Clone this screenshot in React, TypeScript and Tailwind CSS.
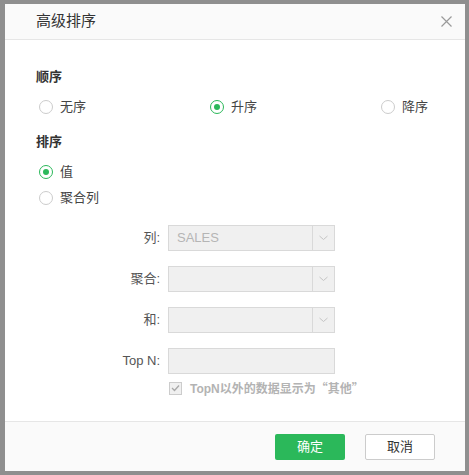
import React from "react";

const font = { fontFamily: '"Liberation Sans", "Noto Sans CJK SC", sans-serif' };
const cjk = { fontFamily: '"Noto Sans CJK SC", sans-serif' };

function Radio({ checked, label }: { checked?: boolean; label: string }) {
  return (
    <div className="flex items-center h-[18px]">
      <span
        className={
          checked
            ? "w-[14px] h-[14px] rounded-full border border-[#2bb85a] flex items-center justify-center bg-white"
            : "w-[14px] h-[14px] rounded-full border border-[#cccccc] bg-white"
        }
      >
        {checked && <span className="w-[6px] h-[6px] rounded-full bg-[#2bb85a]" />}
      </span>
      <span className="ml-[7px] text-[13px] text-[#444444]">{label}</span>
    </div>
  );
}

function Select({ value, arrow = true }: { value?: string; arrow?: boolean }) {
  return (
    <div className="w-[167px] h-[26px] border border-[#d9d9d9] bg-[#f0f0f0] flex items-stretch">
      <div className="flex-1 flex items-center pl-[8px] text-[13px] text-[#b5b5b5]">{value}</div>
      {arrow && (
        <div className="w-[22px] border-l border-[#d9d9d9] flex items-center justify-center">
          <svg width="9" height="6" viewBox="0 0 9 6" fill="none">
            <path d="M0.5 1 L4.5 4.5 L8.5 1" stroke="#c4c4c4" strokeWidth="1" />
          </svg>
        </div>
      )}
    </div>
  );
}

function Row({ label, children }: { label: string; children: React.ReactNode }) {
  return (
    <div className="flex items-center h-[26px]">
      <div className="w-[125px] text-right text-[13px] text-[#555555] pr-[1px]">{label}</div>
      <div className="ml-[7px]">{children}</div>
    </div>
  );
}

export default function App() {
  return (
    <div className="w-[469px] h-[475px] bg-[#8f8f8f] pl-[5px] pt-[4px]" style={font}>
      <div className="w-[460px] h-[467px] bg-white flex flex-col">
        <div className="h-[36px] bg-[#fafafa] border-b border-[#e6e6e6] flex items-center justify-between pl-[31px] pr-[13px]">
          <span className="text-[15px] text-[#333333]">高级排序</span>
          <svg width="11" height="11" viewBox="0 0 11 11" fill="none">
            <path d="M0.5 0.5 L10.5 10.5 M10.5 0.5 L0.5 10.5" stroke="#9a9a9a" strokeWidth="1.2" />
          </svg>
        </div>
        <div className="flex-1 pl-[31px]">
          <div className="mt-[28px] h-[18px] flex items-center text-[13px] font-bold text-[#333333]">顺序</div>
          <div className="mt-[12px] ml-[3px] flex">
            <div className="w-[171px]"><Radio label="无序" /></div>
            <div className="w-[171px]"><Radio checked label="升序" /></div>
            <div><Radio label="降序" /></div>
          </div>
          <div className="mt-[17px] h-[18px] flex items-center text-[13px] font-bold text-[#333333]">排序</div>
          <div className="mt-[12px] ml-[3px]"><Radio checked label="值" /></div>
          <div className="mt-[8px] ml-[3px]"><Radio label="聚合列" /></div>
          <div className="mt-[18px] flex flex-col gap-[15px]">
            <Row label="列:"><Select value="SALES" /></Row>
            <Row label="聚合:"><Select /></Row>
            <Row label="和:"><Select /></Row>
            <Row label="Top N:"><Select arrow={false} /></Row>
          </div>
          <div className="mt-[6px] ml-[133px] flex items-center h-[16px]">
            <span className="w-[13px] h-[13px] border border-[#cccccc] bg-[#f0f0f0] flex items-center justify-center">
              <svg width="9" height="8" viewBox="0 0 9 8" fill="none">
                <path d="M1 4 L3.5 6.5 L8 1.5" stroke="#a8a8a8" strokeWidth="1.3" />
              </svg>
            </span>
            <span className="ml-[8px] text-[12px] font-bold text-[#b3b3b3]">
              TopN以外的数据显示为<span style={cjk}>“其他”</span>
            </span>
          </div>
        </div>
        <div className="h-[50px] border-t border-[#e6e6e6] bg-[#fafafa] flex items-center justify-end pr-[30px] gap-[20px]">
          <button className="w-[70px] h-[26px] rounded-[2px] bg-[#2bb85a] text-white text-[13px]">确定</button>
          <button className="w-[70px] h-[26px] rounded-[2px] bg-white border border-[#cccccc] text-[#333333] text-[13px]">取消</button>
        </div>
      </div>
    </div>
  );
}
